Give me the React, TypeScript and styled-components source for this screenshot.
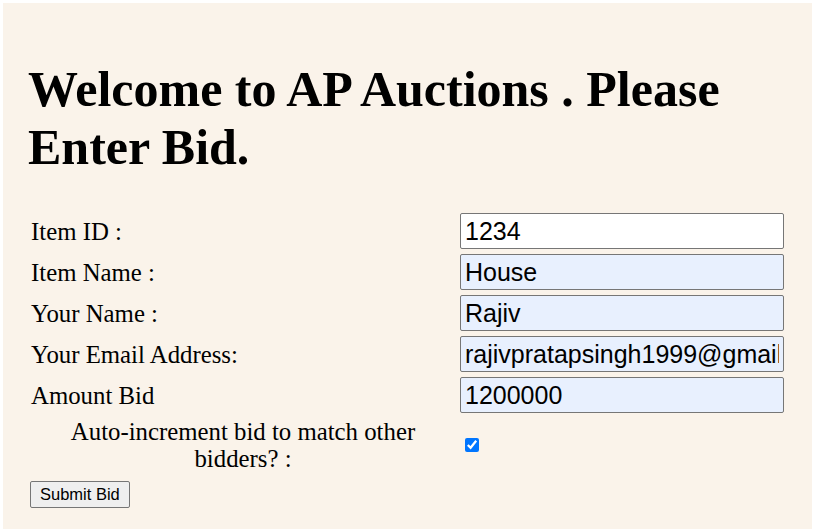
import React from "react";
import styled, { createGlobalStyle } from "styled-components";

const Global = createGlobalStyle`
  html, body { margin: 0; padding: 0; background: #ffffff; }
  body { font-family: "Liberation Serif", "Times New Roman", serif; }
`;

const Page = styled.div`
  margin: 3px 7px 0 3px;
  min-height: 526px;
  background: #faf3ea;
  padding: 57px 0 0 25px;
  box-sizing: border-box;
`;

const Heading = styled.h1`
  margin: 0 0 37px 0;
  font-size: 50px;
  line-height: 58px;
  font-weight: bold;
  color: #000;
  max-width: 740px;
`;

const Form = styled.form`
  display: grid;
  grid-template-columns: 427px 324px;
  column-gap: 5px;
  row-gap: 5px;
  align-items: center;
`;

const Label = styled.label<{ $center?: boolean }>`
  font-size: 24.8px;
  line-height: 27px;
  padding-left: 3px;
  text-align: ${(p) => (p.$center ? "center" : "left")};
  color: #000;
`;

const Input = styled.input<{ $filled?: boolean }>`
  box-sizing: border-box;
  width: 324px;
  height: 36px;
  border: 1px solid #767676;
  border-radius: 2px;
  padding: 0 4px;
  font-family: "Liberation Sans", Arial, sans-serif;
  font-size: 25px;
  color: #000;
  background: ${(p) => (p.$filled ? "#e8f0fe" : "#ffffff")};
  outline: none;
`;

const Check = styled.input`
  margin: 3px 3px 3px 5px;
  width: 14px;
  height: 14px;
  accent-color: #0075ff;
`;

const Submit = styled.button`
  margin: 9px 0 0 2px;
  height: 27px;
  padding: 0 9px;
  font-family: "Liberation Sans", Arial, sans-serif;
  font-size: 16.5px;
  color: #000;
  background: #efefef;
  border: 1px solid #767676;
  border-radius: 2px;
`;

const rows: { label: string; value: string; filled: boolean }[] = [
  { label: "Item ID :", value: "1234", filled: false },
  { label: "Item Name :", value: "House", filled: true },
  { label: "Your Name :", value: "Rajiv", filled: true },
  { label: "Your Email Address:", value: "rajivpratapsingh1999@gmail.com", filled: true },
  { label: "Amount Bid", value: "1200000", filled: true },
];

export default function App() {
  return (
    <>
      <Global />
      <Page>
        <Heading>Welcome to AP Auctions . Please Enter Bid.</Heading>
        <Form onSubmit={(e) => e.preventDefault()}>
          {rows.map((r) => (
            <React.Fragment key={r.label}>
              <Label>{r.label}</Label>
              <Input $filled={r.filled} defaultValue={r.value} />
            </React.Fragment>
          ))}
          <Label $center>Auto-increment bid to match other bidders? :</Label>
          <div>
            <Check type="checkbox" defaultChecked />
          </div>
        </Form>
        <Submit type="submit">Submit Bid</Submit>
      </Page>
    </>
  );
}
